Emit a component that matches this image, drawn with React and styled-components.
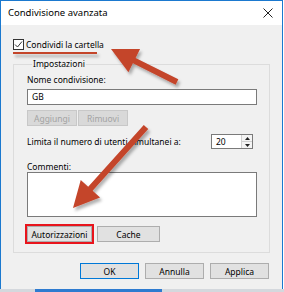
import React from "react";
import styled, { createGlobalStyle } from "styled-components";

const Global = createGlobalStyle`
  html, body { margin: 0; padding: 0; background: #ffffff; }
  body { font-family: "Noto Sans", "Open Sans", sans-serif; }
  * { box-sizing: border-box; }
`;

const Frame = styled.div`
  position: relative;
  width: 284px;
  height: 292px;
  overflow: hidden;
  background: #ffffff;
`;

const Window = styled.div`
  width: 283px;
  height: 289px;
  display: flex;
  flex-direction: column;
  border: 1px solid #1b79cf;
  border-bottom: none;
  background: #f0f0f0;
  font-size: 8.5px;
  color: #000;
`;

const TitleBar = styled.div`
  height: 24px;
  flex: none;
  background: #ffffff;
  display: flex;
  align-items: center;
  justify-content: space-between;
  padding: 0 9px 0 7px;
  font-size: 9.5px;
`;

const Title = styled.span`
  line-height: 12px;
`;

const Content = styled.div`
  flex: 1;
  display: flex;
  flex-direction: column;
  padding: 14px 12px 0 12px;
`;

const CheckRow = styled.label`
  display: flex;
  align-items: center;
  gap: 2px;
  height: 11px;
  line-height: 11px;
`;

const Box = styled.span`
  width: 11px;
  height: 11px;
  border: 1px solid #333;
  background: #fff;
  display: flex;
  align-items: center;
  justify-content: center;
`;

const Group = styled.fieldset`
  margin: 8px 0 0 0;
  padding: 4px 12px 10px 13px;
  border: 1px solid #dcdcdc;
  display: flex;
  flex-direction: column;
  min-width: 0;
`;

const Legend = styled.legend`
  padding: 0 1px;
  margin-left: 5px;
  line-height: 12px;
`;

const Label = styled.div`
  line-height: ${(p) => p.$lh || 12}px;
  margin-top: ${(p) => p.$mt || 0}px;
  white-space: nowrap;
`;

const TextBox = styled.div`
  height: ${(p) => p.$h || 16}px;
  margin-top: ${(p) => p.$mt || 0}px;
  background: #fff;
  border: 1px solid #7a7a7a;
  padding: 0 4px;
  line-height: 14px;
`;

const ButtonRow = styled.div`
  display: flex;
  gap: ${(p) => p.$gap || 1}px;
  margin-top: ${(p) => p.$mt || 0}px;
  justify-content: ${(p) => p.$justify || "flex-start"};
  padding-right: ${(p) => p.$pr || 0}px;
`;

const Button = styled.div`
  width: ${(p) => p.$w}px;
  height: 16px;
  display: flex;
  align-items: center;
  justify-content: center;
  background: ${(p) => (p.$disabled ? "#d9d9d9" : "#e1e1e1")};
  color: ${(p) => (p.$disabled ? "#a3a3a3" : "#000")};
  border: 1px solid
    ${(p) => (p.$default ? "#0078d7" : p.$disabled ? "#c8c8c8" : "#adadad")};
  outline: ${(p) => (p.$marked ? "2px solid #e8141c" : "none")};
  outline-offset: 0;
  margin-left: ${(p) => p.$ml || 0}px;
`;

const SpinRow = styled.div`
  display: flex;
  align-items: center;
  justify-content: space-between;
  margin-top: 8px;
  height: 15px;
  padding-right: 4px;
`;

const Spin = styled.div`
  width: 42px;
  height: 15px;
  display: flex;
  background: #fff;
  border: 1px solid #7a7a7a;
`;

const SpinValue = styled.div`
  flex: 1;
  padding-left: 4px;
  line-height: 13px;
`;

const SpinArrows = styled.div`
  width: 11px;
  display: flex;
  flex-direction: column;
  border-left: 1px solid #d0d0d0;
`;

const SpinHalf = styled.div`
  flex: 1;
  display: flex;
  align-items: center;
  justify-content: center;
  background: #f4f4f4;
  border-top: ${(p) => (p.$bottom ? "1px solid #d0d0d0" : "none")};
`;

const Taskbar = styled.div`
  height: 3px;
  width: 284px;
  background: #d4d8dd;
  display: flex;
  padding-left: 35px;
`;

const TaskSeg = styled.div`
  width: 127px;
  background: #2e7bd0;
`;

const Overlay = styled.svg`
  position: absolute;
  left: 0;
  top: 0;
  pointer-events: none;
`;

function Arrow({ tail, tip, head = 26, half = 13, width = 6 }) {
  const dx = tip[0] - tail[0];
  const dy = tip[1] - tail[1];
  const len = Math.hypot(dx, dy);
  const ux = dx / len;
  const uy = dy / len;
  const bx = tip[0] - ux * head;
  const by = tip[1] - uy * head;
  const nx = -uy;
  const ny = ux;
  const pts = [
    [tail[0] + nx * width / 2, tail[1] + ny * width / 2],
    [bx + nx * width / 2, by + ny * width / 2],
    [bx + nx * half, by + ny * half],
    tip,
    [bx - nx * half, by - ny * half],
    [bx - nx * width / 2, by - ny * width / 2],
    [tail[0] - nx * width / 2, tail[1] - ny * width / 2],
  ];
  return <polygon points={pts.map((p) => p.join(",")).join(" ")} fill="#c4452b" />;
}

export default function App() {
  return (
    <Frame>
      <Global />
      <Window>
        <TitleBar>
          <Title>Condivisione avanzata</Title>
          <svg width="10" height="10" viewBox="0 0 10 10">
            <path d="M0.5 0.5 L9.5 9.5 M9.5 0.5 L0.5 9.5" stroke="#222" strokeWidth="1" />
          </svg>
        </TitleBar>
        <Content>
          <CheckRow>
            <Box>
              <svg width="9" height="9" viewBox="0 0 9 9">
                <path d="M1 4.5 L3.5 7 L8 1.5" fill="none" stroke="#333" strokeWidth="1" />
              </svg>
            </Box>
            <span>Condividi la cartella</span>
          </CheckRow>
          <Group>
            <Legend>Impostazioni</Legend>
            <Label>Nome condivisione:</Label>
            <TextBox $mt={3}>GB</TextBox>
            <ButtonRow $mt={5}>
              <Button $w={50} $disabled>Aggiungi</Button>
              <Button $w={50} $disabled>Rimuovi</Button>
            </ButtonRow>
            <SpinRow>
              <span>Limita il numero di utenti simultanei a:</span>
              <Spin>
                <SpinValue>20</SpinValue>
                <SpinArrows>
                  <SpinHalf>
                    <svg width="5" height="3" viewBox="0 0 5 3"><path d="M0 3 L2.5 0 L5 3 Z" fill="#222" /></svg>
                  </SpinHalf>
                  <SpinHalf $bottom>
                    <svg width="5" height="3" viewBox="0 0 5 3"><path d="M0 0 L2.5 3 L5 0 Z" fill="#222" /></svg>
                  </SpinHalf>
                </SpinArrows>
              </Spin>
            </SpinRow>
            <Label $mt={12} $lh={11}>Commenti:</Label>
            <TextBox $h={45} />
            <ButtonRow $mt={9} $gap={5}>
              <Button $w={65} $marked>Autorizzazioni</Button>
              <Button $w={63}>Cache</Button>
            </ButtonRow>
          </Group>
          <ButtonRow $mt={10} $gap={6} $justify="flex-end" $pr={1}>
            <Button $w={59} $default>OK</Button>
            <Button $w={59}>Annulla</Button>
            <Button $w={59}>Applica</Button>
          </ButtonRow>
        </Content>
      </Window>
      <Taskbar>
        <TaskSeg />
      </Taskbar>
      <Overlay width="284" height="292" viewBox="0 0 284 292">
        <defs>
          <filter id="sh" x="-20%" y="-20%" width="140%" height="160%">
            <feDropShadow dx="2" dy="3" stdDeviation="1.5" floodColor="#000" floodOpacity="0.3" />
          </filter>
        </defs>
        <g filter="url(#sh)">
          <rect x="13" y="52" width="84" height="2" fill="#c4452b" />
          <Arrow tail={[177, 82]} tip={[111, 49]} />
          <Arrow tail={[146, 127]} tip={[73, 208]} />
        </g>
      </Overlay>
    </Frame>
  );
}
